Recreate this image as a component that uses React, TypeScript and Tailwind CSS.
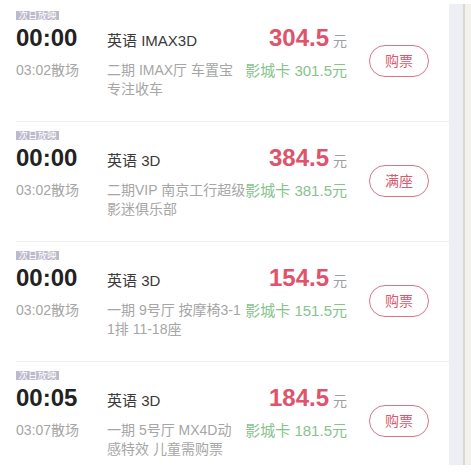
import React from "react";

type Row = {
  time: string;
  end: string;
  title: string;
  hall: [string, string];
  price: string;
  card: string;
  btn: string;
};

const rows: Row[] = [
  { time: "00:00", end: "03:02散场", title: "英语 IMAX3D", hall: ["二期 IMAX厅 车置宝", "专注收车"], price: "304.5", card: "301.5", btn: "购票" },
  { time: "00:00", end: "03:02散场", title: "英语 3D", hall: ["二期VIP 南京工行超级", "影迷俱乐部"], price: "384.5", card: "381.5", btn: "满座" },
  { time: "00:00", end: "03:02散场", title: "英语 3D", hall: ["一期 9号厅 按摩椅3-1", "1排 11-18座"], price: "154.5", card: "151.5", btn: "购票" },
  { time: "00:05", end: "03:07散场", title: "英语 3D", hall: ["一期 5号厅 MX4D动", "感特效 儿童需购票"], price: "184.5", card: "181.5", btn: "购票" },
];

export default function App() {
  return (
    <div
      className="flex w-[471px] h-[472px] bg-white overflow-hidden"
      style={{ fontFamily: '"Liberation Sans", "Noto Sans CJK SC", sans-serif' }}
    >
      <div className="w-[449px] h-[472px] overflow-hidden pt-[1px]">
        {rows.map((r, i) => (
          <div
            key={i}
            className={`ml-[16px] w-[433px] h-[120px] flex border-t ${i === 0 ? "border-transparent" : "border-[#eeeeee]"}`}
          >
            <div className="w-[91px] pt-[9px] flex flex-col">
              <div className="w-[43px] h-[9px] bg-[#bcb9cb] text-white text-[9.5px] leading-[9px] text-center whitespace-nowrap overflow-hidden">
                次日放映
              </div>
              <div className="mt-[6px] h-[24px] text-[24px] leading-[24px] font-bold text-[#222222]">{r.time}</div>
              <div className="mt-[11px] text-[14px] leading-[19px] text-[#a6a6a6] whitespace-nowrap">{r.end}</div>
            </div>
            <div className="w-[140px] pt-[29px] flex flex-col">
              <div className="text-[15px] leading-[19px] text-[#3a3a3a] whitespace-nowrap">{r.title}</div>
              <div className="mt-[11px] text-[14px] leading-[19px] text-[#a6a6a6] whitespace-nowrap">{r.hall[0]}</div>
              <div className="text-[14px] leading-[19px] text-[#a6a6a6] whitespace-nowrap">{r.hall[1]}</div>
            </div>
            <div className="w-[100px] pt-[24px] flex flex-col items-end">
              <div className="h-[24px] leading-[24px] whitespace-nowrap">
                <span className="text-[24px] font-bold text-[#e0536a]">{r.price}</span>
                <span className="ml-[4px] text-[14px] text-[#a0a0a0]">元</span>
              </div>
              <div className="mt-[11px] text-[15px] leading-[19px] text-[#86c48c] whitespace-nowrap">
                影城卡 {r.card}元
              </div>
            </div>
            <div className="ml-[22px] mt-[43px] w-[60px] h-[32px] rounded-full border border-[#dc7386] flex items-center justify-center text-[14px] text-[#d65c70]">
              {r.btn}
            </div>
          </div>
        ))}
      </div>
      <div className="w-[22px] h-[472px] pt-[4px]">
        <div className="h-[461px] flex">
          <div className="w-[14px] bg-[#eeeff4]" />
          <div className="w-[2px] bg-[#dcd8cf]" />
          <div className="w-[6px] bg-[#f4f2ec]" />
        </div>
      </div>
    </div>
  );
}
